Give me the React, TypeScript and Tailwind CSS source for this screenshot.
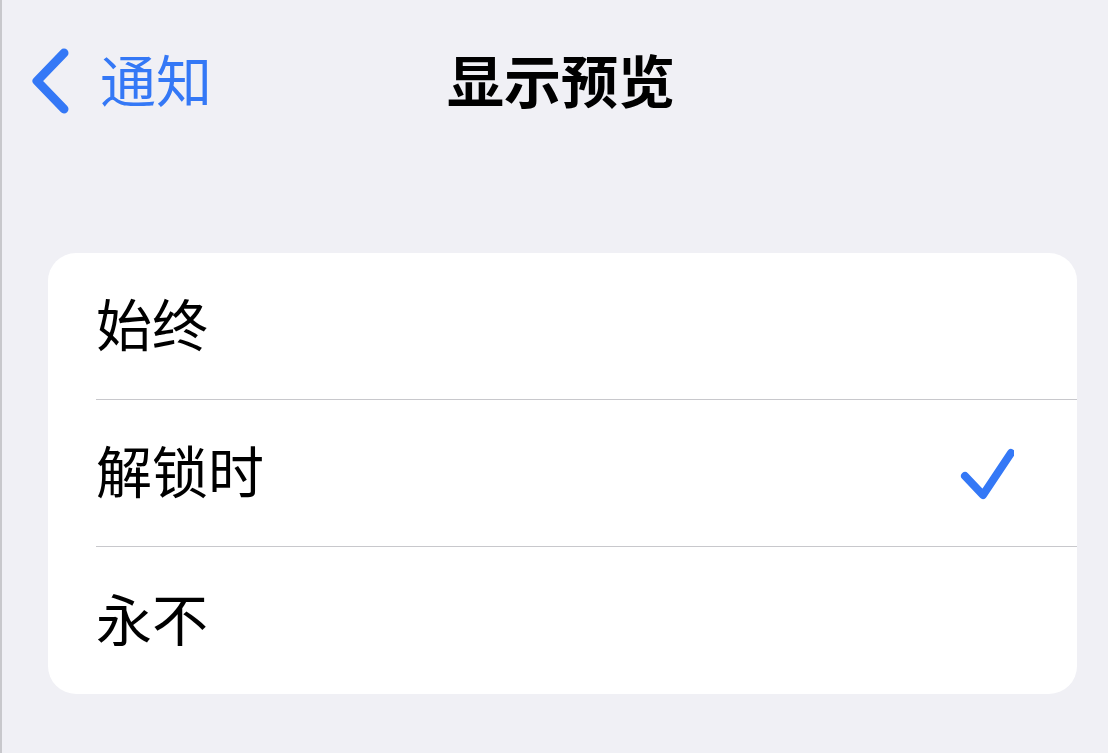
import React from "react";

interface Option {
    id: string;
    label: string;
}

const options: Option[] = [
    { id: "always", label: "始终" },
    { id: "unlocked", label: "解锁时" },
    { id: "never", label: "永不" },
];

const font = { fontFamily: '"Noto Sans CJK SC", "Noto Sans", sans-serif' };

const App: React.FC = () => {
    const selected = "unlocked";

    return (
        <div
            className="min-h-[753px] w-full bg-[#f0f0f5] border-l-2 border-[#c8c8cc] text-black"
            style={font}
        >
            {/* nav bar */}
            <div className="grid grid-cols-[1fr_auto_1fr] items-center h-[156px]">
                <div className="flex items-center pl-[26px]">
                    <svg width="46" height="68" viewBox="0 0 46 68" className="text-[#3478f6] mt-[6px]">
                        <path
                            d="M36 6 L9 34 L36 62"
                            fill="none"
                            stroke="currentColor"
                            strokeWidth="9"
                            strokeLinecap="round"
                            strokeLinejoin="round"
                        />
                    </svg>
                    <span className="ml-[26px] text-[56px] leading-none text-[#3478f6]">通知</span>
                </div>
                <h1 className="ml-[12px] text-[57px] leading-none font-bold">显示预览</h1>
                <div />
            </div>

            {/* options */}
            <div className="mt-[97px] mx-[46px] mr-[31px] bg-white rounded-[28px] overflow-hidden">
                {options.map((option, i) => (
                    <div key={option.id} className="pl-[48px]">
                        <div
                            className={
                                "h-[147px] flex items-center justify-between pr-[63px] " +
                                (i < options.length - 1 ? "border-b border-[#c8c8cc]" : "")
                            }
                        >
                            <span className="text-[56px] leading-none mb-[8px]">{option.label}</span>
                            {option.id === selected && (
                                <svg width="56" height="56" viewBox="0 0 56 56" className="text-[#3478f6]">
                                    <path
                                        d="M7 31 L25 50 L53 8"
                                        fill="none"
                                        stroke="currentColor"
                                        strokeWidth="8"
                                        strokeLinecap="round"
                                        strokeLinejoin="round"
                                    />
                                </svg>
                            )}
                        </div>
                    </div>
                ))}
            </div>
        </div>
    );
};

export default App;
